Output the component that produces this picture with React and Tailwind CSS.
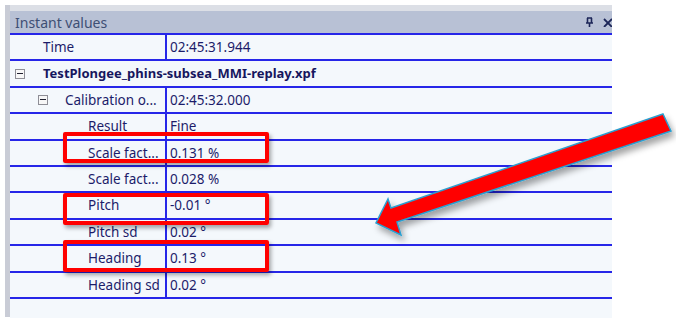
import React from 'react';

const rows = [
  { label: 'Time', value: '02:45:31.944', indent: 33 },
  { label: 'TestPlongee_phins-subsea_MMI-replay.xpf', group: true },
  { label: 'Calibration o...', value: '02:45:32.000', indent: 55, expander: 28 },
  { label: 'Result', value: 'Fine', indent: 78 },
  { label: 'Scale fact...', value: '0.131 %', indent: 78 },
  { label: 'Scale fact...', value: '0.028 %', indent: 78 },
  { label: 'Pitch', value: '-0.01 °', indent: 78 },
  { label: 'Pitch sd', value: '0.02 °', indent: 78 },
  { label: 'Heading', value: '0.13 °', indent: 78 },
  { label: 'Heading sd', value: '0.02 °', indent: 78 },
];

function Expander({ left }) {
  return (
    <span
      className="absolute top-1/2 -translate-y-1/2 w-[10px] h-[10px] border border-[#8e8e96] bg-[#f7f7f7] flex items-center justify-center"
      style={{ left }}
    >
      <span className="w-[6px] h-[1px] bg-[#202030]" />
    </span>
  );
}

function Row({ row }) {
  if (row.group) {
    return (
      <div className="relative h-[26.4px] border-b-2 border-[#2626e8] flex items-center">
        <Expander left={5} />
        <span className="pl-[33px] text-[13px] font-bold text-[#16165e] whitespace-nowrap">{row.label}</span>
      </div>
    );
  }
  return (
    <div className="relative h-[26.4px] border-b-2 border-[#2626e8] flex items-center">
      {row.expander && <Expander left={row.expander} />}
      <div className="w-[157px] h-full flex items-center border-r-2 border-[#2626e8] whitespace-nowrap overflow-hidden" style={{ paddingLeft: row.indent }}>
        {row.label}
      </div>
      <div className="pl-[3px] whitespace-nowrap">{row.value}</div>
    </div>
  );
}

export default function App() {
  return (
    <div className="relative w-[676px] h-[323px] bg-white overflow-hidden" style={{ fontFamily: '"Noto Sans", "Liberation Sans", sans-serif' }}>
      <div className="ml-[5px] mt-[5px] w-[607px] h-[312px] bg-[#dcdfe6] border-l-[5px] border-[#c9ccd6] pt-[6px]">
        <div className="h-[24px] bg-[#b8c1d5] border-b-2 border-[#2626e8] flex items-center justify-between pl-[5px] pr-0">
          <span className="text-[14px] text-[#3e4f74]">Instant values</span>
          <div className="flex items-center gap-[9px] text-[#1c2658] text-[13px] font-bold">
            <svg width="9" height="10" viewBox="0 0 9 10">
              <path d="M2 1h5M2.5 1v5M6.5 1v5M1 6h7M4.5 6v4" stroke="#1c2658" strokeWidth="1.6" fill="none" />
            </svg>
            <svg width="9" height="9" viewBox="0 0 9 9">
              <path d="M1 1l8 8M9 1l-8 8" stroke="#1c2658" strokeWidth="1.8" />
            </svg>
          </div>
        </div>
        <div className="bg-[#f4f8fc] text-[13.5px] text-[#1c1c6a] h-[283px]">
          {rows.map((r, i) => (
            <Row key={i} row={r} />
          ))}
        </div>
      </div>

      <div className="absolute left-[63px] top-[132px] w-[206px] h-[31px] border-[4px] border-[#ff0000] rounded-[2px] shadow-[2px_3px_4px_rgba(0,0,0,0.35)]" />
      <div className="absolute left-[63px] top-[193px] w-[206px] h-[32px] border-[4px] border-[#ff0000] rounded-[2px] shadow-[2px_3px_4px_rgba(0,0,0,0.35)]" />
      <div className="absolute left-[63px] top-[240px] w-[206px] h-[32px] border-[4px] border-[#ff0000] rounded-[2px] shadow-[2px_3px_4px_rgba(0,0,0,0.35)]" />

      <svg className="absolute left-0 top-0" width="676" height="323" viewBox="0 0 676 323">
        <defs>
          <filter id="sh" x="-10%" y="-20%" width="130%" height="160%">
            <feDropShadow dx="3" dy="5" stdDeviation="3" floodColor="#000" floodOpacity="0.35" />
          </filter>
        </defs>
        <polygon
          points="663,114 671,131 397,222 401,235 376,223 388,199 391,208"
          fill="#ff0000"
          stroke="#2a9fd0"
          strokeWidth="1.5"
          strokeLinejoin="miter"
          filter="url(#sh)"
        />
      </svg>
    </div>
  );
}
